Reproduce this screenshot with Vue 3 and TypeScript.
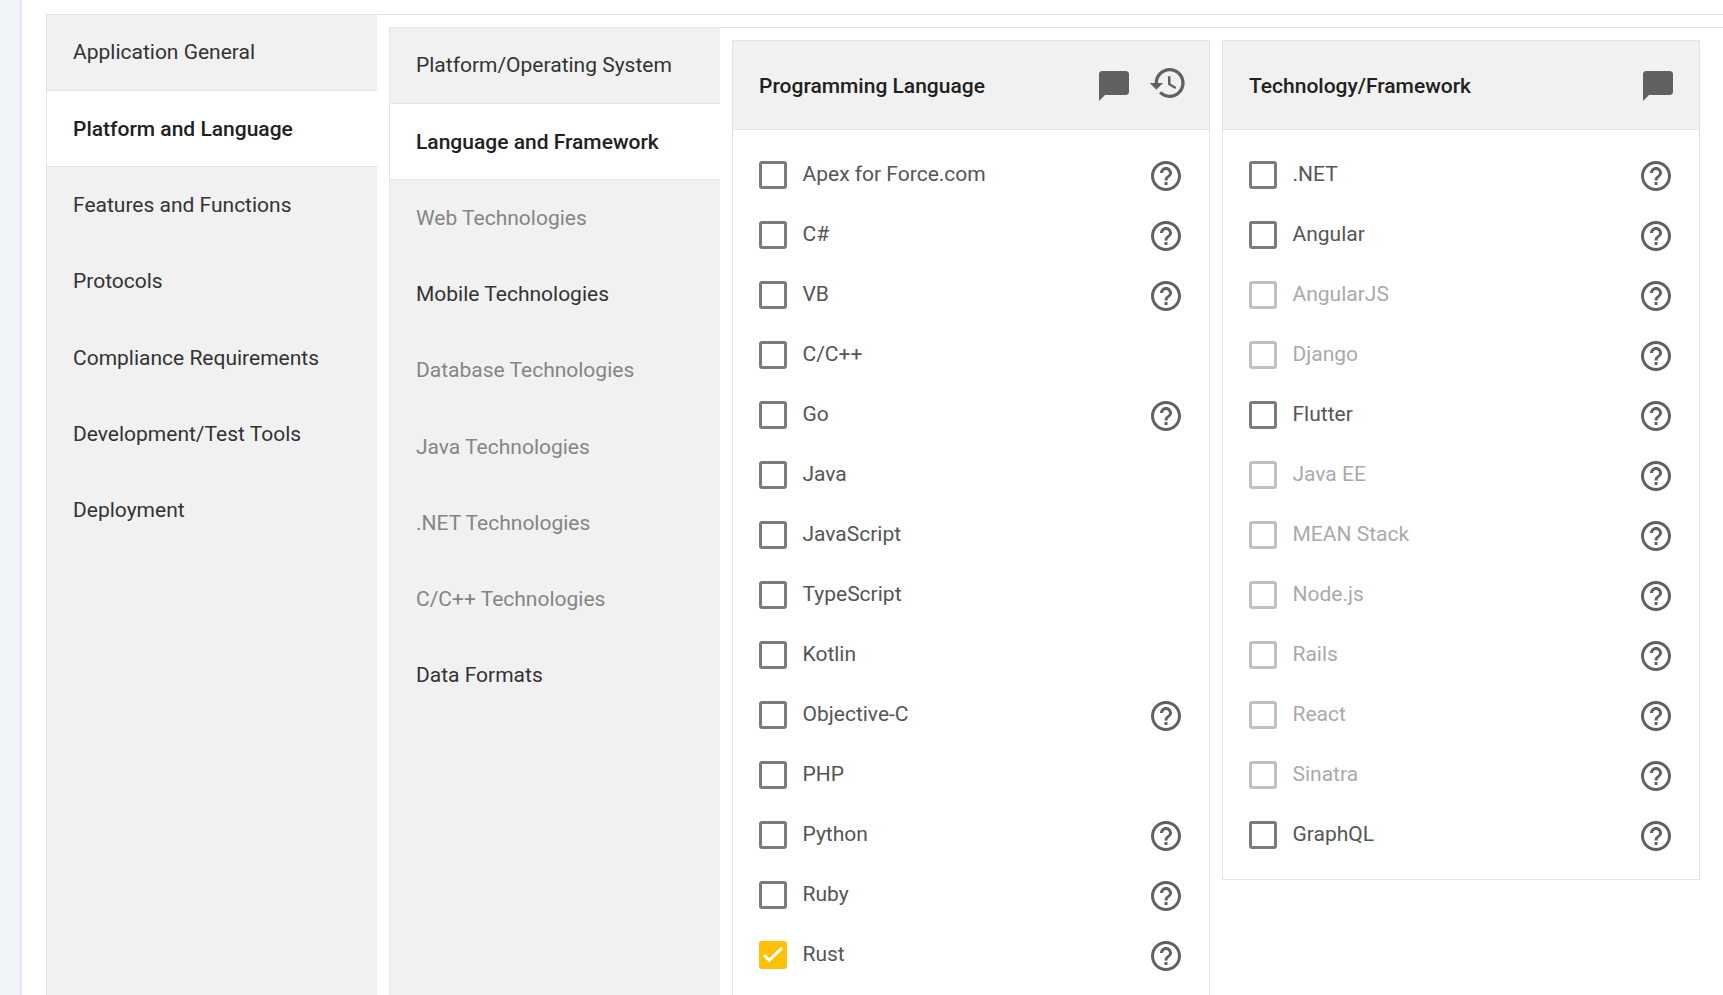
<script setup lang="ts">
interface NavItem { label: string; state?: 'active' | 'muted' | 'above' }
interface Opt { label: string; help?: boolean; disabled?: boolean; checked?: boolean }

const nav1: NavItem[] = [
  { label: 'Application General', state: 'above' },
  { label: 'Platform and Language', state: 'active' },
  { label: 'Features and Functions' },
  { label: 'Protocols' },
  { label: 'Compliance Requirements' },
  { label: 'Development/Test Tools' },
  { label: 'Deployment' },
]
const nav2: NavItem[] = [
  { label: 'Platform/Operating System', state: 'above' },
  { label: 'Language and Framework', state: 'active' },
  { label: 'Web Technologies', state: 'muted' },
  { label: 'Mobile Technologies' },
  { label: 'Database Technologies', state: 'muted' },
  { label: 'Java Technologies', state: 'muted' },
  { label: '.NET Technologies', state: 'muted' },
  { label: 'C/C++ Technologies', state: 'muted' },
  { label: 'Data Formats' },
]
const languages: Opt[] = [
  { label: 'Apex for Force.com', help: true },
  { label: 'C#', help: true },
  { label: 'VB', help: true },
  { label: 'C/C++' },
  { label: 'Go', help: true },
  { label: 'Java' },
  { label: 'JavaScript' },
  { label: 'TypeScript' },
  { label: 'Kotlin' },
  { label: 'Objective-C', help: true },
  { label: 'PHP' },
  { label: 'Python', help: true },
  { label: 'Ruby', help: true },
  { label: 'Rust', help: true, checked: true },
]
const frameworks: Opt[] = [
  { label: '.NET', help: true },
  { label: 'Angular', help: true },
  { label: 'AngularJS', help: true, disabled: true },
  { label: 'Django', help: true, disabled: true },
  { label: 'Flutter', help: true },
  { label: 'Java EE', help: true, disabled: true },
  { label: 'MEAN Stack', help: true, disabled: true },
  { label: 'Node.js', help: true, disabled: true },
  { label: 'Rails', help: true, disabled: true },
  { label: 'React', help: true, disabled: true },
  { label: 'Sinatra', help: true, disabled: true },
  { label: 'GraphQL', help: true },
]
const panels = [
  { title: 'Programming Language', history: true, options: languages },
  { title: 'Technology/Framework', history: false, options: frameworks },
]
</script>

<template>
  <div class="page">
    <div class="strip"></div>
    <main class="main">
      <div class="level1">
        <nav class="nav">
          <div v-for="item in nav1" :key="item.label" class="nav-item" :class="item.state">{{ item.label }}</div>
        </nav>
        <div class="level2">
          <nav class="nav">
            <div v-for="item in nav2" :key="item.label" class="nav-item" :class="item.state">{{ item.label }}</div>
          </nav>
          <div class="columns">
            <section v-for="panel in panels" :key="panel.title" class="panel">
              <header class="panel-head">
                <h2 class="panel-title">{{ panel.title }}</h2>
                <svg class="chat" viewBox="0 0 24 24"><path d="M20 2H4c-1.1 0-1.99.9-1.99 2L2 22l4-4h14c1.1 0 2-.9 2-2V4c0-1.1-.9-2-2-2z" /></svg>
                <svg v-if="panel.history" class="history" viewBox="0 0 24 24"><path d="M13 3c-4.97 0-9 4.03-9 9H1l3.89 3.89.07.14L9 12H6c0-3.87 3.13-7 7-7s7 3.13 7 7-3.13 7-7 7c-1.93 0-3.68-.79-4.94-2.06l-1.42 1.42C8.27 19.99 10.51 21 13 21c4.97 0 9-4.03 9-9s-4.03-9-9-9zm-1 5v5l4.28 2.54.72-1.21-3.5-2.08V8H12z" /></svg>
              </header>
              <ul class="options">
                <li v-for="opt in panel.options" :key="opt.label" class="option" :class="{ disabled: opt.disabled }">
                  <span class="box" :class="{ checked: opt.checked }">
                    <svg v-if="opt.checked" viewBox="0 0 28 28"><path d="M5 14l5.3 5.3L23 7" /></svg>
                  </span>
                  <span class="label">{{ opt.label }}</span>
                  <svg v-if="opt.help" class="help" viewBox="0 0 24 24"><path d="M11 18h2v-2h-2v2zm1-16C6.48 2 2 6.48 2 12s4.48 10 10 10 10-4.48 10-10S17.52 2 12 2zm0 18c-4.41 0-8-3.59-8-8s3.59-8 8-8 8 3.59 8 8-3.59 8-8 8zm0-14c-2.21 0-4 1.79-4 4h2c0-1.1.9-2 2-2s2 .9 2 2c0 2-3 1.75-3 5h2c0-2.25 3-2.5 3-5 0-2.21-1.79-4-4-4z" /></svg>
                </li>
              </ul>
            </section>
          </div>
        </div>
      </div>
    </main>
  </div>
</template>

<style>
html, body { margin: 0; background: #fff; overflow: hidden; }
</style>

<style scoped>
.page {
  display: flex;
  width: 1723px;
  height: 995px;
  overflow: hidden;
  font-family: Roboto, "Liberation Sans", sans-serif;
  font-size: 21px;
  background: #fff;
}
.strip {
  width: 19px;
  flex: none;
  background: #f1f4f9;
  border-right: 3px solid #e9ebf0;
}
.main {
  flex: 1;
  min-width: 0;
  padding: 14px 0 0 24px;
}
.level1 {
  display: flex;
  height: 100%;
  border-top: 1px solid #e4e4e4;
}
.level2 {
  flex: 1;
  min-width: 0;
  display: flex;
  margin: 12px 0 0 12px;
  border-top: 1px solid #e4e4e4;
}
.nav {
  width: 331px;
  flex: none;
  box-sizing: border-box;
  background: #f1f1f1;
  border-left: 1px solid #e4e4e4;
}
.nav-item {
  display: flex;
  align-items: center;
  height: 76.2px;
  box-sizing: border-box;
  padding: 0 0 0.4px 26px;
  color: #333;
}
.nav-item.above { border-bottom: 1px solid #e4e4e4; padding-bottom: 1px; }
.nav-item.active {
  background: #fff;
  border-bottom: 1px solid #e4e4e4;
  padding-bottom: 0;
  color: #212121;
  font-weight: 500;
}
.nav-item.muted { color: #858585; padding-bottom: 1px; }
.columns {
  flex: 1;
  min-width: 0;
  display: flex;
  align-items: flex-start;
  gap: 12px;
  padding: 12px 24px 0 12px;
}
.panel {
  flex: 0 0 478px;
  box-sizing: border-box;
  border: 1px solid #e4e4e4;
}
.panel-head {
  display: flex;
  align-items: center;
  height: 89px;
  box-sizing: border-box;
  padding: 0 23px 0 26px;
  background: #f1f1f1;
  border-bottom: 1px solid #e4e4e4;
}
.panel-title {
  flex: 1;
  margin: 0;
  padding-top: 2px;
  font-size: 21px;
  font-weight: 500;
  color: #212121;
}
.chat {
  width: 36px;
  height: 36px;
  margin-top: 1px;
  fill: #616161;
}
.history {
  width: 40px;
  height: 40px;
  margin: -4px -2px 0 16px;
  fill: #616161;
}
.options {
  list-style: none;
  margin: 0;
  padding: 14.6px 25px 14.4px 26px;
}
.option {
  display: flex;
  align-items: center;
  height: 60px;
  color: #555;
}
.option.disabled { color: #aaa; }
.box {
  width: 28px;
  height: 28px;
  flex: none;
  box-sizing: border-box;
  border: 3px solid #7b7b7b;
  border-radius: 3px;
  margin-right: 15.5px;
}
.option.disabled .box { border-color: #c0c0c0; }
.box.checked {
  background: #ffc107;
  border: none;
}
.box svg {
  display: block;
  width: 28px;
  height: 28px;
  fill: none;
  stroke: #fff;
  stroke-width: 3px;
}
.label { flex: 1; margin-top: -1px; }
.help {
  width: 36px;
  height: 36px;
  margin: 3px 0 0 0;
  fill: #616161;
}
</style>
